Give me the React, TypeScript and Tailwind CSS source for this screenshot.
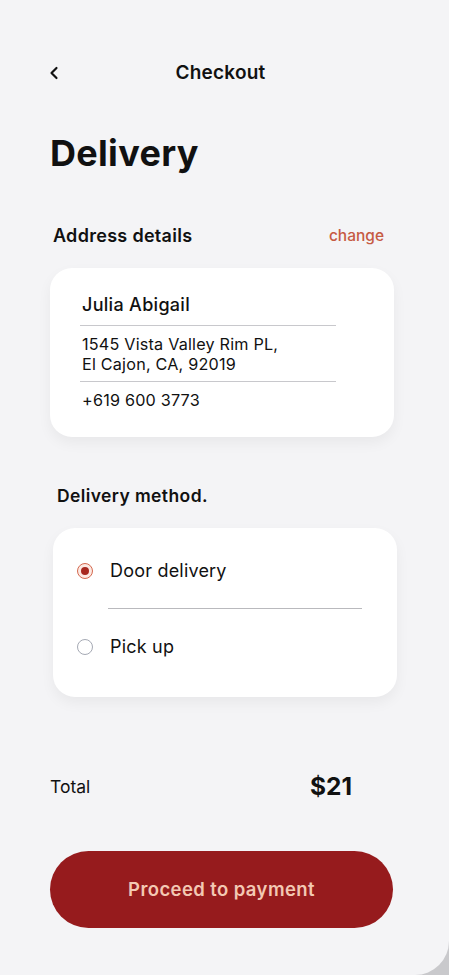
import { ChevronLeft } from "lucide-react";

const font = { fontFamily: "Inter, 'Noto Sans', sans-serif" };

const Divider = ({ className }: { className: string }) => (
  <div className={"h-px " + className} />
);

const Radio = ({ checked }: { checked: boolean }) =>
  checked ? (
    <span className="flex h-[16px] w-[16px] items-center justify-center rounded-full border-[1.5px] border-[#d4694f] bg-[#fde9e3]">
      <span className="h-[8px] w-[8px] rounded-full bg-[#a8281f]" />
    </span>
  ) : (
    <span className="h-[16px] w-[16px] rounded-full border-[1.5px] border-[#a5a9b4] bg-white" />
  );

export default function App() {
  return (
    <div className="h-[975px] w-[449px] bg-[#c9c9cc]" style={font}>
      <div className="flex h-full w-full flex-col rounded-br-[34px] bg-[#f4f4f6] text-[#111]">
        {/* header */}
        <div className="relative mt-[61px] flex h-[24px] items-center justify-center">
          <ChevronLeft className="absolute left-[44px] h-[20px] w-[20px]" strokeWidth={2.6} />
          <span className="ml-[-8px] text-[19px] font-semibold tracking-[0.2px]">Checkout</span>
        </div>

        <h1 className="ml-[50px] mt-[48px] text-[36px] font-bold leading-[40px] tracking-[0.3px]">Delivery</h1>

        <div className="mt-[49px] flex items-center justify-between pl-[53px] pr-[65px]">
          <span className="text-[18px] font-semibold tracking-[0.3px]">Address details</span>
          <span className="text-[15.5px] font-medium text-[#c65a43]">change</span>
        </div>

        {/* address card */}
        <div className="ml-[50px] mt-[19px] h-[169px] w-[344px] rounded-[22px] bg-white pl-[30px] pt-[25px] shadow-[0_6px_14px_rgba(0,0,0,0.05)]">
          <div className="pl-[2px] text-[18px] font-medium leading-[24px] tracking-[0.3px]">Julia Abigail</div>
          <Divider className="mt-[8px] w-[256px] bg-[#c8c8cc]" />
          <div className="mt-[8px] pl-[2px] text-[16.2px] leading-[20px] tracking-[0.2px]">
            1545 Vista Valley Rim PL,
            <br />
            El Cajon, CA, 92019
          </div>
          <Divider className="mt-[7px] w-[256px] bg-[#c8c8cc]" />
          <div className="mt-[7px] pl-[2px] text-[16.2px] leading-[22px] tracking-[0.2px]">+619 600 3773</div>
        </div>

        <div className="ml-[57px] mt-[46px] text-[17.5px] font-semibold tracking-[0.4px]">Delivery method.</div>

        {/* delivery method card */}
        <div className="ml-[53px] mt-[19px] h-[169px] w-[344px] rounded-[22px] bg-white pt-[31px] shadow-[0_6px_14px_rgba(0,0,0,0.05)]">
          <div className="flex items-center pl-[24px]">
            <Radio checked />
            <span className="ml-[17px] text-[18px] leading-[24px] tracking-[0.2px]">Door delivery</span>
          </div>
          <Divider className="ml-[55px] mt-[25px] w-[254px] bg-[#b9b9bd]" />
          <div className="mt-[26px] flex items-center pl-[24px]">
            <Radio checked={false} />
            <span className="ml-[17px] text-[18px] leading-[24px] tracking-[0.2px]">Pick up</span>
          </div>
        </div>

        <div className="mt-[71px] flex items-center pl-[50px]">
          <span className="w-[260px] text-[17.5px]">Total</span>
          <span className="text-[24.5px] font-bold">$21</span>
        </div>

        <button className="ml-[50px] mt-[46px] flex h-[77px] w-[343px] items-center justify-center rounded-full bg-[#961b1d] text-[18.5px] font-semibold tracking-[0.4px] text-[#f3c8b3]">
          Proceed to payment
        </button>
      </div>
    </div>
  );
}
